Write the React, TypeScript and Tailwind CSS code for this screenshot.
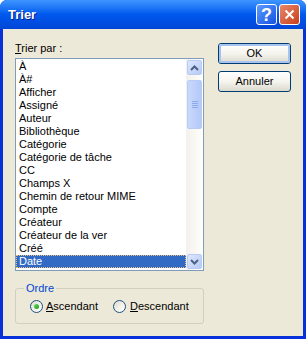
import React, { useState } from "react";

const fields = [
  "À",
  "À#",
  "Afficher",
  "Assigné",
  "Auteur",
  "Bibliothèque",
  "Catégorie",
  "Catégorie de tâche",
  "CC",
  "Champs X",
  "Chemin de retour MIME",
  "Compte",
  "Créateur",
  "Créateur de la ver",
  "Créé",
  "Date",
];

const ScrollButton = ({ down }: { down?: boolean }) => (
  <div className="w-[17px] h-[17px] p-[1px]">
    <div className="w-full h-full rounded-[2px] border border-[#b8cbf6] bg-gradient-to-br from-[#dde8fe] to-[#b7caf5] flex items-center justify-center">
      <svg width="9" height="6" viewBox="0 0 9 6">
        <path
          d={down ? "M1 1 L4.5 4.5 L8 1" : "M1 5 L4.5 1.5 L8 5"}
          stroke="#4d6185"
          strokeWidth="2"
          fill="none"
        />
      </svg>
    </div>
  </div>
);

const Radio = ({ checked }: { checked?: boolean }) => (
  <div className="w-[13px] h-[13px] rounded-full border border-[#1c5180] bg-gradient-to-br from-[#dcd9c5] via-[#f2f1ea] to-white flex items-center justify-center">
    {checked && <div className="w-[5px] h-[5px] rounded-full bg-gradient-to-br from-[#5ce05c] to-[#1a9a1a]" />}
  </div>
);

const XpButton = ({ label, isDefault }: { label: string; isDefault?: boolean }) => (
  <button className="w-[73px] h-[21px] rounded-[3px] border border-[#003c74] bg-gradient-to-b from-white via-[#f5f4ee] to-[#dcdace] p-0">
    <div
      className={
        "w-full h-full rounded-[2px] flex items-center justify-center " +
        (isDefault ? "border-2 border-[#a9c3ef]" : "")
      }
    >
      {label}
    </div>
  </button>
);

export default function App() {
  const [selected, setSelected] = useState("Date");
  const [order, setOrder] = useState("asc");

  return (
    <div className="w-[306px] h-[339px] flex flex-col bg-[#0831d9] rounded-t-[7px] overflow-hidden text-[11px] leading-[13px] text-black font-['Liberation_Sans',Arial,sans-serif]">
      {/* title bar */}
      <div className="h-[29px] shrink-0 flex items-center pl-[8px] pr-[6px] bg-gradient-to-b from-[#3d95ff] via-[#0058ee] to-[#0046d6]">
        <div className="flex-1 text-white font-bold text-[13px] [text-shadow:1px_1px_#0a1a8c]">Trier</div>
        <div className="w-[21px] h-[21px] rounded-[3px] border border-white bg-gradient-to-br from-[#5c9bff] to-[#1650e0] flex items-center justify-center text-white font-bold text-[18px] leading-none">
          ?
        </div>
        <div className="w-[21px] h-[21px] ml-[2px] rounded-[3px] border border-white bg-gradient-to-br from-[#e8876a] to-[#c83c12] flex items-center justify-center">
          <svg width="11" height="11" viewBox="0 0 11 11">
            <path d="M1.5 1.5 L9.5 9.5 M9.5 1.5 L1.5 9.5" stroke="white" strokeWidth="2" />
          </svg>
        </div>
      </div>

      {/* client area */}
      <div className="flex-1 ml-[3px] mr-[3px] mb-[3px] bg-[#ece9d8] flex pl-[12px] pt-[13px]">
        <div className="w-[189px] flex flex-col">
          <div>
            <span className="underline">T</span>rier par :
          </div>
          <div className="mt-[3px] h-[213px] border border-[#7f9db9] bg-white flex">
            <div className="flex-1 pt-[1px]">
              {fields.map((f) => (
                <div
                  key={f}
                  onClick={() => setSelected(f)}
                  className={
                    "h-[13px] pl-[3px] whitespace-nowrap overflow-hidden " +
                    (selected === f ? "bg-[#316ac5] text-white outline-1 outline-dotted outline-[#e8c080] -outline-offset-1" : "")
                  }
                >
                  {f}
                </div>
              ))}
            </div>
            <div className="w-[17px] flex flex-col bg-gradient-to-r from-[#f3f1ec] to-[#fefefb]">
              <ScrollButton />
              <div className="flex-1 pt-[4px] px-[1px]">
                <div className="h-[49px] rounded-[2px] border border-[#b8cbf6] bg-gradient-to-r from-[#c9d8fc] to-[#b5c9f7] flex flex-col items-center justify-center gap-[1px]">
                  <div className="w-[6px] h-[1px] bg-[#8caaf0]" />
                  <div className="w-[6px] h-[1px] bg-[#8caaf0]" />
                  <div className="w-[6px] h-[1px] bg-[#8caaf0]" />
                  <div className="w-[6px] h-[1px] bg-[#8caaf0]" />
                </div>
              </div>
              <ScrollButton down />
            </div>
          </div>

          <fieldset className="mt-[11px] h-[42px] border border-[#d0d0bf] rounded-[3px] px-[14px]">
            <legend className="ml-[-6px] px-[2px] text-[#0046d5]">Ordre</legend>
            <div className="flex items-center mt-[5px]">
              <label className="flex items-center" onClick={() => setOrder("asc")}>
                <Radio checked={order === "asc"} />
                <span className="ml-[3px]">
                  <span className="underline">A</span>scendant
                </span>
              </label>
              <label className="flex items-center ml-[15px]" onClick={() => setOrder("desc")}>
                <Radio checked={order === "desc"} />
                <span className="ml-[4px]">
                  <span className="underline">D</span>escendant
                </span>
              </label>
            </div>
          </fieldset>
        </div>

        <div className="ml-[14px] pt-[1px] flex flex-col gap-[7px]">
          <XpButton label="OK" isDefault />
          <XpButton label="Annuler" />
        </div>
      </div>
    </div>
  );
}
